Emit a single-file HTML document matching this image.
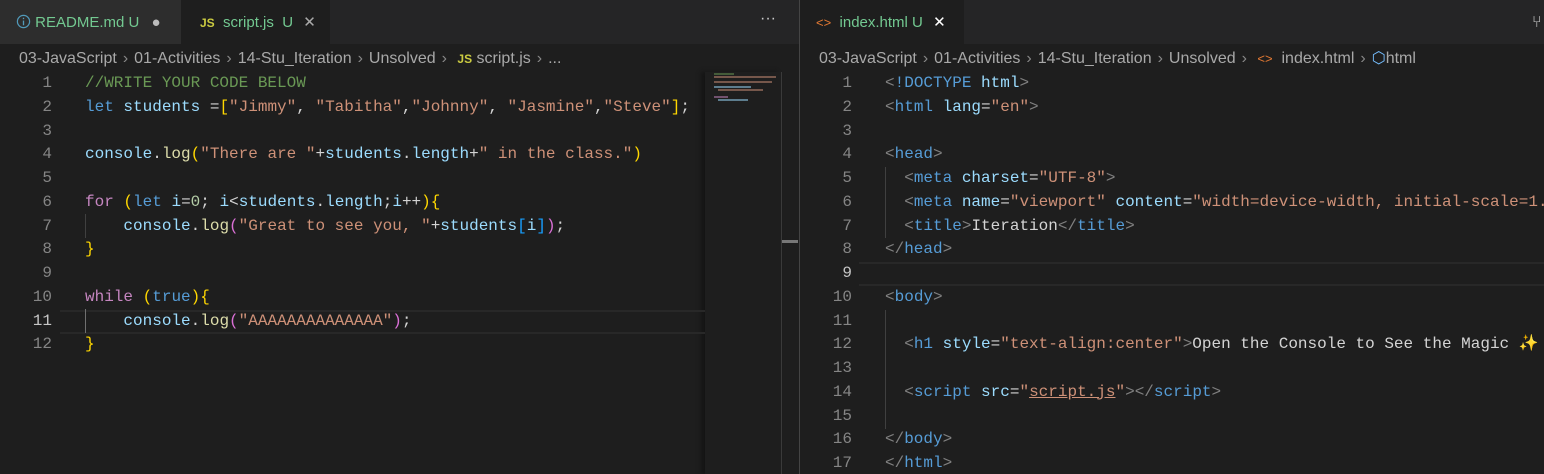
<!DOCTYPE html>
<html><head><style>
*{margin:0;padding:0;box-sizing:border-box}
body{width:1544px;height:474px;background:#1e1e1e;overflow:hidden;font-family:"Liberation Sans",sans-serif;position:relative}
.pane{position:absolute;top:0;height:474px;background:#1e1e1e;overflow:hidden}
.tabs{position:absolute;top:0;left:0;right:0;height:44px;background:#252526}
.tab{position:absolute;top:1px;height:44px;font-size:15px;line-height:44px;color:#73c991;white-space:nowrap}
.bc{position:absolute;top:45px;left:0;right:0;height:28px;font-size:16px;line-height:28px;color:#a9a9a9;white-space:nowrap;padding-left:19px}
.bc .s{color:#888;margin:0 6px}
.code{position:absolute;top:72px;left:0;right:0;height:410px;font-family:"Liberation Mono",monospace;font-size:16px;line-height:23.75px;white-space:pre}
.ln{position:absolute;top:0;left:0;width:52px;text-align:right;color:#858585}
.tx{position:absolute;top:0;color:#d4d4d4}
.k{color:#569cd6}.v{color:#9cdcfe}.s1{color:#ce9178}.c{color:#6a9955}.p{color:#c586c0}.f{color:#dcdcaa}
.y{color:#ffd700}.m{color:#da70d6}.b{color:#179fff}.g{color:#808080}.w{color:#d4d4d4}
.cur{position:absolute;height:24px;border-top:2px solid #282828;border-bottom:2px solid #282828}
.guide{position:absolute;width:1px;background:#404040}
</style></head><body>

<div class="pane" style="left:0;width:799px">
 <div class="tabs">
  <div class="tab" style="top:0;left:0;width:181px;background:#2d2d2d;padding-left:16px;padding-top:1px"><svg width="15" height="15" viewBox="0 0 16 16" style="vertical-align:-2px"><circle cx="8" cy="8" r="6.5" fill="none" stroke="#519aba" stroke-width="1.3"/><rect x="7.3" y="7" width="1.4" height="5" fill="#519aba"/><rect x="7.3" y="4" width="1.4" height="1.5" fill="#519aba"/></svg> README.md U <span style="color:#bbb;margin-left:8px">●</span></div>
  <div class="tab" style="top:0;left:181px;width:149px;background:#1e1e1e;padding-left:19px;padding-top:1px"><span style="color:#cbcb41;font-weight:bold;font-size:12px">JS</span>&nbsp; script.js &nbsp;U <span style="color:#aaa;margin-left:6px">✕</span></div>
  <div class="tab" style="left:760px;color:#ccc;font-size:16px;top:-3px">···</div>
 </div>
 <div class="bc">03-JavaScript<span class="s">›</span>01-Activities<span class="s">›</span>14-Stu_Iteration<span class="s">›</span>Unsolved<span class="s">›</span> <span style="color:#cbcb41;font-weight:bold;font-size:12px">JS</span> script.js<span class="s">›</span>...</div>
 <div style="position:absolute;left:705px;top:72px;width:76px;height:402px;background:#1e1e1e;box-shadow:-4px 0 4px #151515"></div>
 <div style="position:absolute;left:714px;top:73px;width:60px;height:40px;opacity:.5">
  <div style="height:2px;width:20px;background:#6a9955;margin-bottom:1px"></div>
  <div style="height:2px;width:62px;background:#ce9178;margin-bottom:3px"></div>
  <div style="height:2px;width:58px;background:#ce9178;margin-bottom:3px"></div>
  <div style="height:2px;width:37px;background:#9cdcfe;margin-bottom:1px"></div>
  <div style="height:2px;width:45px;margin-left:4px;background:#ce9178;margin-bottom:5px"></div>
  <div style="height:2px;width:14px;background:#c586c0;margin-bottom:1px"></div>
  <div style="height:2px;width:30px;margin-left:4px;background:#9cdcfe"></div>
 </div>
 <div style="position:absolute;left:781px;top:72px;width:1px;height:402px;background:#3a3a3a"></div>
 <div style="position:absolute;left:782px;top:240px;width:16px;height:3px;background:#777"></div>
 <div class="cur" style="left:60px;width:645px;top:310px"></div>
 <div class="guide" style="left:85px;top:214px;height:24px"></div>
 <div class="guide" style="left:85px;top:309px;height:24px;background:#707070"></div>
 <div class="code"><div class="ln">1
2
3
4
5
6
7
8
9
10
<span style="color:#c6c6c6">11</span>
12</div><div class="tx" style="left:85px"><span class="c">//WRITE YOUR CODE BELOW</span>
<span class="k">let</span> <span class="v">students</span> =<span class="y">[</span><span class="s1">"Jimmy"</span>, <span class="s1">"Tabitha"</span>,<span class="s1">"Johnny"</span>, <span class="s1">"Jasmine"</span>,<span class="s1">"Steve"</span><span class="y">]</span>;

<span class="v">console</span>.<span class="f">log</span><span class="y">(</span><span class="s1">"There are "</span>+<span class="v">students</span>.<span class="v">length</span>+<span class="s1">" in the class."</span><span class="y">)</span>

<span class="p">for</span> <span class="y">(</span><span class="k">let</span> <span class="v">i</span>=<span style="color:#b5cea8">0</span>; <span class="v">i</span>&lt;<span class="v">students</span>.<span class="v">length</span>;<span class="v">i</span>++<span class="y">){</span>
    <span class="v">console</span>.<span class="f">log</span><span class="m">(</span><span class="s1">"Great to see you, "</span>+<span class="v">students</span><span class="b">[</span><span class="v">i</span><span class="b">]</span><span class="m">)</span>;
<span class="y">}</span>

<span class="p">while</span> <span class="y">(</span><span class="k">true</span><span class="y">){</span>
    <span class="v">console</span>.<span class="f">log</span><span class="m">(</span><span class="s1">"AAAAAAAAAAAAAA"</span><span class="m">)</span>;
<span class="y">}</span></div></div>
</div>

<div style="position:absolute;left:799px;top:0;width:1px;height:474px;background:#444"></div>

<div class="pane" style="left:800px;width:744px">
 <div class="tabs">
  <div class="tab" style="top:0;left:0;width:164px;background:#1e1e1e;padding-left:16px;padding-top:1px"><span style="color:#e37933;font-size:13px">&lt;&gt;</span>&nbsp; index.html U <span style="color:#fff;margin-left:6px">✕</span></div>
  <div class="tab" style="left:732px;color:#ccc;font-size:16px">⑂</div>
 </div>
 <div class="bc">03-JavaScript<span class="s">›</span>01-Activities<span class="s">›</span>14-Stu_Iteration<span class="s">›</span>Unsolved<span class="s">›</span> <span style="color:#e37933;font-size:13px">&lt;&gt;</span>&nbsp; index.html<span class="s">›</span><span style="color:#75beff">⬡</span>html</div>
 <div class="cur" style="left:59px;width:690px;top:262px"></div>
 <div class="guide" style="left:85px;top:167px;height:71px"></div>
 <div class="guide" style="left:85px;top:310px;height:119px"></div>
 <div class="code"><div class="ln">1
2
3
4
5
6
7
8
<span style="color:#c6c6c6">9</span>
10
11
12
13
14
15
16
17</div><div class="tx" style="left:85px"><span class="g">&lt;</span><span class="k">!DOCTYPE</span> <span class="v">html</span><span class="g">&gt;</span>
<span class="g">&lt;</span><span class="k">html</span> <span class="v">lang</span>=<span class="s1">"en"</span><span class="g">&gt;</span>

<span class="g">&lt;</span><span class="k">head</span><span class="g">&gt;</span>
  <span class="g">&lt;</span><span class="k">meta</span> <span class="v">charset</span>=<span class="s1">"UTF-8"</span><span class="g">&gt;</span>
  <span class="g">&lt;</span><span class="k">meta</span> <span class="v">name</span>=<span class="s1">"viewport"</span> <span class="v">content</span>=<span class="s1">"width=device-width, initial-scale=1.0"</span><span class="g">&gt;</span>
  <span class="g">&lt;</span><span class="k">title</span><span class="g">&gt;</span>Iteration<span class="g">&lt;/</span><span class="k">title</span><span class="g">&gt;</span>
<span class="g">&lt;/</span><span class="k">head</span><span class="g">&gt;</span>

<span class="g">&lt;</span><span class="k">body</span><span class="g">&gt;</span>

  <span class="g">&lt;</span><span class="k">h1</span> <span class="v">style</span>=<span class="s1">"text-align:center"</span><span class="g">&gt;</span>Open the Console to See the Magic <span style="color:#ffd700">✨</span>

  <span class="g">&lt;</span><span class="k">script</span> <span class="v">src</span>=<span class="s1">"<u>script.js</u>"</span><span class="g">&gt;&lt;/</span><span class="k">script</span><span class="g">&gt;</span>

<span class="g">&lt;/</span><span class="k">body</span><span class="g">&gt;</span>
<span class="g">&lt;/</span><span class="k">html</span><span class="g">&gt;</span></div></div>
</div>
</body></html>
